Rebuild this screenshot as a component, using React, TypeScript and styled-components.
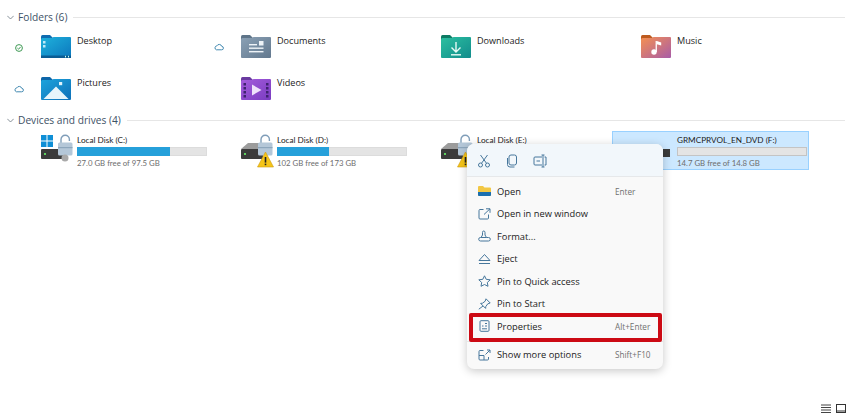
import React from "react";
import styled, { createGlobalStyle } from "styled-components";

const Global = createGlobalStyle`
  html, body { margin: 0; padding: 0; background: #fff; }
  body { font-family: "Open Sans", "Noto Sans", "Liberation Sans", sans-serif; }
`;

const Page = styled.div`
  position: relative;
  width: 850px;
  height: 413px;
  overflow: hidden;
  background: #fff;
  padding-top: 10px;
  box-sizing: border-box;
`;
const SectionHeader = styled.div<{ $gapBelow: number }>`
  display: flex;
  align-items: center;
  height: 14px;
  padding: 0 5px 0 7px;
  margin-bottom: ${(p) => p.$gapBelow}px;
  color: #3d5166;
  font-size: 10.2px;
  white-space: nowrap;
  svg { margin-right: 4px; flex: none; }
`;
const HeaderRule = styled.div`
  flex: 1;
  height: 1px;
  background: #e6e6e6;
  margin-left: 6px;
`;
const Grid = styled.div<{ $rowH: number; $rowGap?: number; $mb?: number }>`
  display: grid;
  grid-template-columns: repeat(4, 200px);
  grid-auto-rows: ${(p) => p.$rowH}px;
  row-gap: ${(p) => p.$rowGap ?? 0}px;
  padding-left: 12px;
  margin-bottom: ${(p) => p.$mb ?? 0}px;
`;
const FolderTile = styled.div`
  display: grid;
  grid-template-columns: 29px 30px 1fr;
`;
const StatusSlot = styled.div`
  display: flex;
  justify-content: flex-start;
  align-items: flex-start;
  padding: 9px 0 0 2px;
`;
const FolderLabel = styled.div`
  font-size: 9.1px;
  line-height: 14px;
  color: #222;
  padding: 0 0 0 6px;
`;
const DriveTile = styled.div<{ $selected?: boolean }>`
  position: relative;
  width: 197px;
  height: 39px;
  box-sizing: border-box;
  display: flex;
  padding: 2px 0 0 28px;
  border: 1px solid ${(p) => (p.$selected ? "#99d1ff" : "transparent")};
  background: ${(p) => (p.$selected ? "#cce8ff" : "transparent")};
`;
const DriveInfo = styled.div`
  width: 130px;
  display: flex;
  flex-direction: column;
`;
const DriveTitle = styled.div`
  font-family: "Lato", "Open Sans", sans-serif;
  font-size: 8.2px;
  line-height: 12px;
  color: #222;
  white-space: nowrap;
`;
const BarTrack = styled.div<{ $selected?: boolean }>`
  height: 9px;
  margin-top: 1px;
  background: #e4e4e4;
  border: 1px solid ${(p) => (p.$selected ? "#c4c4c4" : "#dcdcdc")};
  box-sizing: border-box;
`;
const BarFill = styled.div`
  height: 100%;
  margin: -1px 0 0 -1px;
  padding-bottom: 2px;
  background: #26a0da;
`;
const DriveSub = styled.div`
  font-family: "Lato", "Open Sans", sans-serif;
  font-size: 7.8px;
  line-height: 12px;
  margin-top: 1px;
  color: #6d6d6d;
  white-space: nowrap;
`;
const Menu = styled.div`
  position: absolute;
  left: 467px;
  top: 144px;
  width: 196px;
  height: 225px;
  background: #f9f9f9;
  border-radius: 7px;
  box-shadow: 0 2px 10px rgba(0, 0, 0, 0.22);
  display: flex;
  flex-direction: column;
`;
const Toolbar = styled.div`
  height: 33px;
  flex: none;
  display: flex;
  align-items: center;
  gap: 14px;
  padding: 2px 0 0 10px;
  box-sizing: border-box;
  background: #f2f7fb;
  border-bottom: 1px solid #e6e8ea;
  border-radius: 7px 7px 0 0;
`;
const MenuList = styled.div`
  padding-top: 3px;
  display: flex;
  flex-direction: column;
`;
const MenuRow = styled.div<{ $boxed?: boolean }>`
  position: relative;
  height: 22.5px;
  display: flex;
  align-items: center;
  padding: 0 11px;
  font-size: 9.3px;
  color: #222;
  svg { flex: none; margin-right: 6px; }
  ${(p) =>
    p.$boxed
      ? `&::after { content: ""; position: absolute; left: 2px; right: 1px; top: -2px; bottom: -4px; border: 4px solid #cc0a14; border-radius: 2px; box-sizing: border-box; }`
      : ""}
`;
const RowLabel = styled.span`
  flex: 1;
`;
const Shortcut = styled.span`
  width: 37px;
  font-size: 8.2px;
  color: #707070;
  white-space: nowrap;
`;
const MenuRule = styled.div`
  height: 1px;
  background: #e6e6e6;
  margin: 3px 0 2px;
`;
const StatusBar = styled.div`
  position: absolute;
  right: 4px;
  bottom: 0;
  display: flex;
  gap: 5px;
  align-items: center;
`;

const Chevron = () => (
  <svg width="7" height="5" viewBox="0 0 7 5" fill="none" stroke="#6b7680" strokeWidth="0.8">
    <path d="M0.3 0.8 3.5 4 6.7 0.8" />
  </svg>
);

const SyncOk = () => (
  <svg width="10" height="10" viewBox="0 0 10 10" fill="none" stroke="#3f9a55" strokeWidth="1">
    <circle cx="5" cy="5" r="3.4" />
    <path d="M3.4 5.1 4.6 6.2 6.6 3.9" />
  </svg>
);
const Cloud = () => (
  <svg width="10" height="8" viewBox="0 0 10 8" fill="none" stroke="#2f7da8" strokeWidth="0.9">
    <path d="M2.4 6.8h5.2a1.7 1.7 0 0 0 .2-3.4A2.7 2.7 0 0 0 2.8 2.9 2 2 0 0 0 2.4 6.8z" />
  </svg>
);

type FolderKind = "desktop" | "documents" | "downloads" | "music" | "pictures" | "videos";

const palette: Record<FolderKind, { tab: string; a: string; b: string }> = {
  desktop: { tab: "#0f6cb0", a: "#1fb2dc", b: "#0c77bd" },
  documents: { tab: "#5e7488", a: "#8ba1b5", b: "#62788e" },
  downloads: { tab: "#0e7a63", a: "#2cc0a0", b: "#128c8c" },
  music: { tab: "#bd5a1e", a: "#f59050", b: "#a85ca8" },
  pictures: { tab: "#0c65a8", a: "#1ca4dc", b: "#0e70b8" },
  videos: { tab: "#6a3aa0", a: "#a45cdc", b: "#7a3cc0" },
};

const FolderIcon = ({ kind }: { kind: FolderKind }) => {
  const c = palette[kind];
  const id = `grad-${kind}`;
  return (
    <svg width="30" height="25" viewBox="0 0 30 25">
      <defs>
        <linearGradient id={id} x1="0" y1="0" x2="1" y2="1">
          <stop offset="0" stopColor={c.a} />
          <stop offset="1" stopColor={c.b} />
        </linearGradient>
      </defs>
      <path d="M0 2.500Q0 1 1.500 1H9l3 3v4H0z" fill={c.tab} />
      <path d="M0 5.500Q0 4 1.500 4H11l1.500-1H29q1 0 1 1v19q0 1-1 1H1q-1 0-1-1z" fill={`url(#${id})`} />
      {kind === "desktop" && (
        <>
          <rect x="2" y="7" width="2.500" height="2.500" fill="#bfeaf7" />
          <rect x="2" y="11" width="2.500" height="2.500" fill="#bfeaf7" />
          <rect x="0" y="21.500" width="30" height="2.500" fill="#0a5c94" />
          <rect x="24" y="21.800" width="1" height="1.600" fill="#cfe" />
          <rect x="27" y="21.800" width="1" height="1.600" fill="#cfe" />
        </>
      )}
      {kind === "documents" && (
        <g fill="#eef3f7">
          <rect x="8" y="10" width="8" height="1.400" />
          <rect x="18" y="7" width="4.500" height="4.500" />
          <rect x="8" y="13.500" width="14.500" height="1.400" />
          <rect x="8" y="17" width="14.500" height="1.400" />
        </g>
      )}
      {kind === "downloads" && (
        <g stroke="#e6fbf5" strokeWidth="1.400" fill="none">
          <path d="M15 8v10M10.500 13.500 15 18l4.500-4.500" />
          <path d="M10 20.800h10" />
        </g>
      )}
      {kind === "music" && (
        <g fill="#fff">
          <circle cx="13" cy="18" r="2.700" />
          <rect x="14.600" y="7" width="1.300" height="11" />
          <path d="M15.800 7l4.400 1.400v3.200l-4.400-1.400z" />
        </g>
      )}
      {kind === "pictures" && (
        <>
          <rect x="18" y="6" width="3.200" height="3.200" fill="#dff3fb" />
          <path d="M2.500 23 15 10.500 27.500 23z" fill="#e6f5fb" />
        </>
      )}
      {kind === "videos" && (
        <>
          <g fill="#3e2270">
            {[7, 11, 15, 19].map((y) => (
              <React.Fragment key={y}>
                <rect x="2.500" y={y} width="2.500" height="2.500" />
                <rect x="25" y={y} width="2.500" height="2.500" />
              </React.Fragment>
            ))}
          </g>
          <path d="M11 8.500v11l9.500-5.500z" fill="#efe2fb" />
        </>
      )}
    </svg>
  );
};

const DriveIcon = ({ variant }: { variant: "system" | "warn" | "optical" }) => (
  <svg width="36" height="36" viewBox="0 0 36 36" style={{ flex: "none" }}>
    {variant === "system" && (
      <g fill="#0f8fd6">
        <rect x="0" y="1" width="5.500" height="5.500" />
        <rect x="6.500" y="1" width="5.500" height="5.500" />
        <rect x="0" y="7.500" width="5.500" height="5.500" />
        <rect x="6.500" y="7.500" width="5.500" height="5.500" />
      </g>
    )}
    {variant === "warn" && <path d="M0 15 7 9H22V15z" fill="#9c9c9c" />}
    {variant === "optical" ? (
      <rect x="22" y="15" width="7" height="8" fill="#3b3b3b" />
    ) : (
      <>
        <rect x="0" y="15" width="22" height="10" rx="1" fill="#3b3b3b" />
        <rect x="3" y="19" width="2" height="2" fill="#5fd35f" />
        <path d="M20 9V5.500a4.200 4.200 0 0 1 8.400 0V7" fill="none" stroke="#7f9db8" strokeWidth="1.400" />
        <rect x="17" y="8.500" width="14.500" height="13" rx="1.500" fill="#b4c7d8" />
        <rect x="17" y="13" width="14.500" height="1.200" fill="#8ca6bc" />
      </>
    )}
    {variant === "system" && <circle cx="24" cy="24" r="3.500" fill="#a9a9a9" />}
    {variant === "warn" && (
      <>
        <path d="M24.500 18 32.500 33H16.500z" fill="#f5c518" stroke="#cf9a10" strokeWidth="0.600" />
        <rect x="23.700" y="23" width="1.600" height="5.600" fill="#222" />
        <rect x="23.700" y="29.600" width="1.600" height="1.600" fill="#222" />
      </>
    )}
  </svg>
);

const ms = { fill: "none", stroke: "#47779c", strokeWidth: 1 };

const icons: Record<string, React.ReactNode> = {
  open: (
    <svg width="13" height="12" viewBox="0 0 13 12">
      <path d="M0 2q0-1 1-1h4l1.500 1.500H12q1 0 1 1V10q0 1-1 1H1q-1 0-1-1z" fill="#f2c744" />
      <path d="M0 7h13v3q0 1-1 1H1q-1 0-1-1z" fill="#1a6fb0" />
    </svg>
  ),
  window: (
    <svg width="13" height="12" viewBox="0 0 13 12" {...ms}>
      <path d="M5.500 1.500H2q-1 0-1 1v7.500q0 1 1 1h7.500q1 0 1-1V6.500" />
      <path d="M6 6.500 12 .8M8 .8h4v4" />
    </svg>
  ),
  format: (
    <svg width="13" height="12" viewBox="0 0 13 12" {...ms}>
      <path d="M2.500 11h8q1.800 0 1.800-1.800T10.500 7.500H8.500L7 5V2.500Q7 1 5.700 1T4.500 2.500V5L3 7.500H2.500Q.7 7.500.7 9.200T2.500 11zM3 7.500h5.500" />
    </svg>
  ),
  eject: (
    <svg width="13" height="12" viewBox="0 0 13 12" {...ms}>
      <path d="M6.500 1.500 12 7.500H1zM1 10.500h11" />
    </svg>
  ),
  star: (
    <svg width="13" height="12" viewBox="0 0 13 12" {...ms}>
      <path d="M6.500.8 8.200 4.300 12.200 4.800 9.300 7.500 10 11.300 6.500 9.500 3 11.300 3.700 7.500.8 4.800 4.800 4.300z" />
    </svg>
  ),
  pin: (
    <svg width="13" height="12" viewBox="0 0 13 12" {...ms}>
      <path d="M8 .8 12.200 5 9.800 5.800 7.800 8.500 7.600 10.400 2.600 5.400 4.500 5.200 7.200 3.200zM5 8 .8 11.200" />
    </svg>
  ),
  props: (
    <svg width="13" height="12" viewBox="0 0 13 12" {...ms}>
      <rect x="2" y=".7" width="9" height="10.600" rx="1" />
      <path d="M4 6h1.500M7 3.500h2M7 6h2M4 8.800h5" />
    </svg>
  ),
  more: (
    <svg width="13" height="12" viewBox="0 0 13 12" {...ms}>
      <path d="M5.500 1.500H2q-1 0-1 1v7.500q0 1 1 1h7.500q1 0 1-1V8M1 6.500h5V11" />
      <path d="M7.500 5.500 12 1M9 1h3v3" />
    </svg>
  ),
};

const rows: { icon: string; label: string; shortcut?: string; boxed?: boolean }[] = [
  { icon: "open", label: "Open", shortcut: "Enter" },
  { icon: "window", label: "Open in new window" },
  { icon: "format", label: "Format..." },
  { icon: "eject", label: "Eject" },
  { icon: "star", label: "Pin to Quick access" },
  { icon: "pin", label: "Pin to Start" },
  { icon: "props", label: "Properties", shortcut: "Alt+Enter", boxed: true },
];

const folders: { name: string; kind: FolderKind; status?: "ok" | "cloud" }[] = [
  { name: "Desktop", kind: "desktop", status: "ok" },
  { name: "Documents", kind: "documents", status: "cloud" },
  { name: "Downloads", kind: "downloads" },
  { name: "Music", kind: "music" },
  { name: "Pictures", kind: "pictures", status: "cloud" },
  { name: "Videos", kind: "videos" },
];

const drives = [
  { title: "Local Disk (C:)", sub: "27.0 GB free of 97.5 GB", pct: 72.4, icon: "system" as const },
  { title: "Local Disk (D:)", sub: "102 GB free of 173 GB", pct: 41, icon: "warn" as const },
  { title: "Local Disk (E:)", sub: "", pct: 40, icon: "warn" as const },
  { title: "GRMCPRVOL_EN_DVD (F:)", sub: "14.7 GB free of 14.8 GB", pct: 0, icon: "optical" as const, selected: true },
];

export default function App() {
  return (
    <Page>
      <Global />
      <SectionHeader $gapBelow={10}>
        <Chevron />
        Folders (6)
        <HeaderRule />
      </SectionHeader>
      <Grid $rowH={25} $rowGap={17} $mb={12}>
        {folders.map((f) => (
          <FolderTile key={f.name}>
            <StatusSlot>
              {f.status === "ok" && <SyncOk />}
              {f.status === "cloud" && <Cloud />}
            </StatusSlot>
            <FolderIcon kind={f.kind} />
            <FolderLabel>{f.name}</FolderLabel>
          </FolderTile>
        ))}
      </Grid>
      <SectionHeader $gapBelow={4}>
        <Chevron />
        Devices and drives (4)
        <HeaderRule />
      </SectionHeader>
      <Grid $rowH={39}>
        {drives.map((d) => (
          <DriveTile key={d.title} $selected={d.selected}>
            <DriveIcon variant={d.icon} />
            <DriveInfo>
              <DriveTitle>{d.title}</DriveTitle>
              <BarTrack $selected={d.selected}>
                {d.pct > 0 && <BarFill style={{ width: `${d.pct}%` }} />}
              </BarTrack>
              <DriveSub>{d.sub}</DriveSub>
            </DriveInfo>
          </DriveTile>
        ))}
      </Grid>
      <Menu>
        <Toolbar>
          <svg width="14" height="14" viewBox="0 0 14 14" {...ms}>
            <circle cx="3.500" cy="11" r="2" />
            <circle cx="10.500" cy="11" r="2" />
            <path d="M4.500 9.300 10.500 1M9.500 9.300 3.500 1" />
          </svg>
          <svg width="14" height="14" viewBox="0 0 14 14" {...ms}>
            <rect x="4" y="1" width="7.500" height="10" rx="2" />
            <path d="M2.500 4v6.500Q2.500 13 5 13h4.500" />
          </svg>
          <svg width="14" height="14" viewBox="0 0 14 14" {...ms}>
            <path d="M9 3H2q-1 0-1 1v6q0 1 1 1h7M11.500 3H13v8h-1.500M10 1v12M8.500 1h3M8.500 13h3M3.500 7h3.500" />
          </svg>
        </Toolbar>
        <MenuList>
          {rows.map((r) => (
            <MenuRow key={r.label} $boxed={r.boxed}>
              {icons[r.icon]}
              <RowLabel>{r.label}</RowLabel>
              {r.shortcut && <Shortcut>{r.shortcut}</Shortcut>}
            </MenuRow>
          ))}
          <MenuRule />
          <MenuRow>
            {icons.more}
            <RowLabel>Show more options</RowLabel>
            <Shortcut>Shift+F10</Shortcut>
          </MenuRow>
        </MenuList>
      </Menu>
      <StatusBar>
        <svg width="10" height="9" viewBox="0 0 10 9" stroke="#444" strokeWidth="1">
          <path d="M0 1h10M0 3.500h10M0 6h10M0 8.500h10" />
        </svg>
        <svg width="10" height="9" viewBox="0 0 10 9" fill="#fff" stroke="#333" strokeWidth="1">
          <rect x=".5" y=".5" width="9" height="8" />
          <path d="M.5 7h9" />
        </svg>
      </StatusBar>
    </Page>
  );
}
